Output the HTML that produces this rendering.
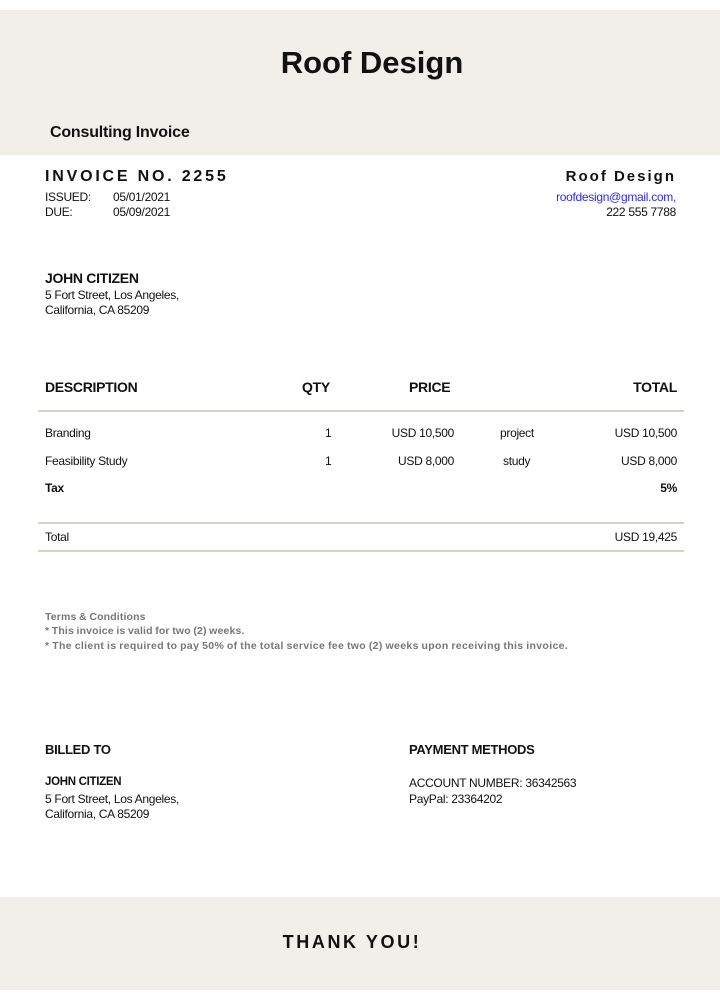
<!DOCTYPE html>
<html><head><style>
body{margin:0;width:720px;height:1000px;background:#fff;font-family:"Liberation Sans",Arial,sans-serif;color:#111;position:relative;overflow:hidden}
div{position:absolute;white-space:nowrap}
.band{background:#f2eeea;left:0;width:720px}
.s{font-size:12px;letter-spacing:-0.3px}
.h{font-size:14px;font-weight:bold;letter-spacing:-0.3px}
.r{text-align:right}
.line{height:2px;background:#d8d4c4;left:38px;width:646px}
.g{color:#777;font-weight:bold;font-size:10.5px;letter-spacing:0.15px;word-spacing:-0.5px}
</style></head><body>
<div class="band" style="top:10px;height:145px"></div>
<div style="left:0;width:744px;text-align:center;top:45px;font-size:31px;font-weight:bold">Roof Design</div>
<div style="left:50px;top:124px;font-size:16px;font-weight:bold;letter-spacing:-0.2px">Consulting Invoice</div>

<div style="left:45px;top:168px;font-size:16px;font-weight:bold;letter-spacing:2.8px">INVOICE NO. 2255</div>
<div class="s" style="left:45px;top:190px">ISSUED:</div><div class="s" style="left:113px;top:190px">05/01/2021</div>
<div class="s" style="left:45px;top:205px">DUE:</div><div class="s" style="left:113px;top:205px">05/09/2021</div>
<div class="r" style="right:44px;top:168px;font-size:15px;font-weight:bold;letter-spacing:2px">Roof Design</div>
<div class="s r" style="right:44px;top:190px;color:#2a2aff">roofdesign@gmail.com,</div>
<div class="s r" style="right:44px;top:205px">222 555 7788</div>

<div class="h" style="left:45px;top:270px">JOHN CITIZEN</div>
<div class="s" style="left:45px;top:288px">5 Fort Street, Los Angeles,</div>
<div class="s" style="left:45px;top:303px">California, CA 85209</div>

<div class="h" style="left:45px;top:379px">DESCRIPTION</div>
<div class="h" style="left:302px;top:379px">QTY</div>
<div class="h" style="left:409px;top:379px">PRICE</div>
<div class="h r" style="right:43px;top:379px">TOTAL</div>
<div class="line" style="top:410px"></div>

<div class="s" style="left:45px;top:426px">Branding</div>
<div class="s" style="left:325px;top:426px">1</div>
<div class="s r" style="right:266px;top:426px">USD 10,500</div>
<div class="s" style="left:500px;top:426px">project</div>
<div class="s r" style="right:43px;top:426px">USD 10,500</div>
<div class="s" style="left:45px;top:454px">Feasibility Study</div>
<div class="s" style="left:325px;top:454px">1</div>
<div class="s r" style="right:266px;top:454px">USD 8,000</div>
<div class="s" style="left:503px;top:454px">study</div>
<div class="s r" style="right:43px;top:454px">USD 8,000</div>
<div class="s" style="left:45px;top:481px;font-weight:bold">Tax</div>
<div class="s r" style="right:43px;top:481px;font-weight:bold">5%</div>
<div class="line" style="top:522px"></div>
<div class="s" style="left:45px;top:530px">Total</div>
<div class="s r" style="right:43px;top:530px">USD 19,425</div>
<div class="line" style="top:550px"></div>

<div class="g" style="left:45px;top:611px">Terms &amp; Conditions</div>
<div class="g" style="left:45px;top:625px">* This invoice is valid for two (2) weeks.</div>
<div class="g" style="left:45px;top:640px;letter-spacing:0.35px">* The client is required to pay 50% of the total service fee two (2) weeks upon receiving this invoice.</div>

<div class="h" style="left:45px;top:742px;font-size:13px">BILLED TO</div>
<div class="s" style="left:45px;top:776px;font-weight:bold;font-size:11.5px">JOHN CITIZEN</div>
<div class="s" style="left:45px;top:792px">5 Fort Street, Los Angeles,</div>
<div class="s" style="left:45px;top:807px">California, CA 85209</div>
<div class="h" style="left:409px;top:742px;font-size:13px">PAYMENT METHODS</div>
<div class="s" style="left:409px;top:776px">ACCOUNT NUMBER: 36342563</div>
<div class="s" style="left:409px;top:792px">PayPal: 23364202</div>

<div class="band" style="top:897px;height:93px"></div>
<div style="left:0;width:704px;text-align:center;top:932px;font-size:18px;font-weight:bold;letter-spacing:2.6px">THANK YOU!</div>
</body></html>
